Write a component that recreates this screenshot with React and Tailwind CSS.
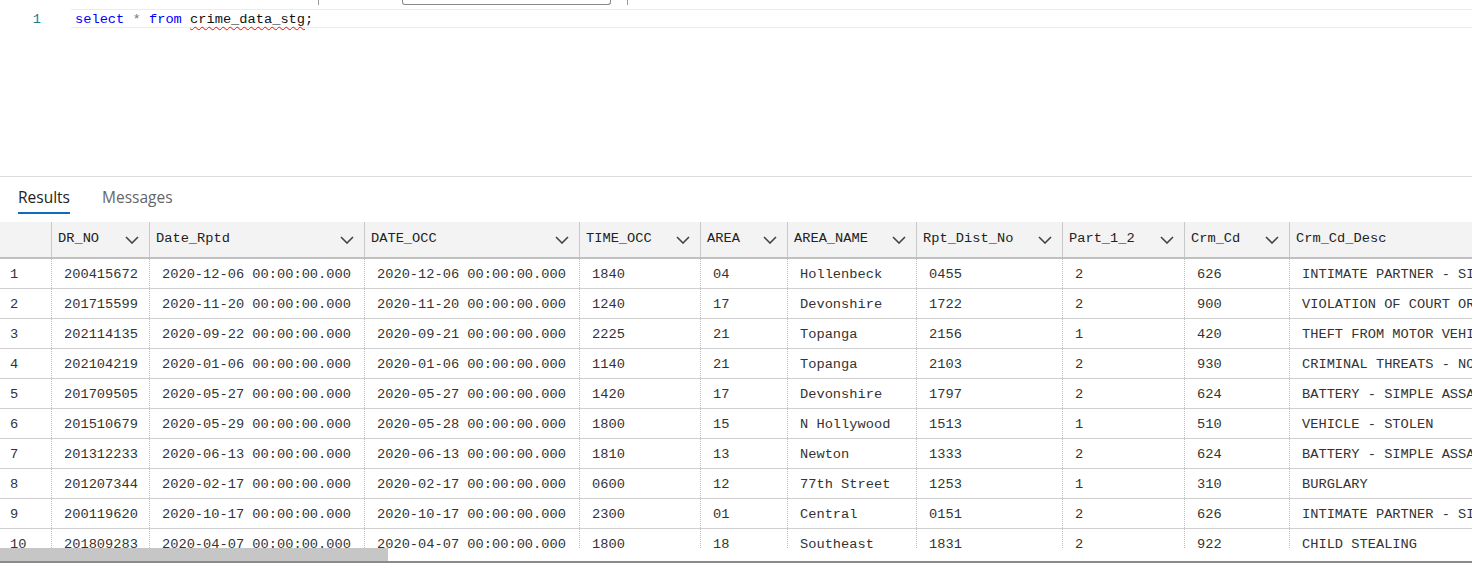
import React from "react";

const MONO = { fontFamily: '"Liberation Mono", "DejaVu Sans Mono", monospace' };

const columns = [
  { name: "", w: "w-[52px]", sort: false },
  { name: "DR_NO", w: "w-[98px]" },
  { name: "Date_Rptd", w: "w-[215px]" },
  { name: "DATE_OCC", w: "w-[215px]" },
  { name: "TIME_OCC", w: "w-[121px]" },
  { name: "AREA", w: "w-[87px]" },
  { name: "AREA_NAME", w: "w-[129px]" },
  { name: "Rpt_Dist_No", w: "w-[146px]" },
  { name: "Part_1_2", w: "w-[122px]" },
  { name: "Crm_Cd", w: "w-[105px]" },
  { name: "Crm_Cd_Desc", w: "w-[320px]", sort: false },
];

const rows = [
  ["1", "200415672", "2020-12-06 00:00:00.000", "2020-12-06 00:00:00.000", "1840", "04", "Hollenbeck", "0455", "2", "626", "INTIMATE PARTNER - SIMPLE ASSAULT"],
  ["2", "201715599", "2020-11-20 00:00:00.000", "2020-11-20 00:00:00.000", "1240", "17", "Devonshire", "1722", "2", "900", "VIOLATION OF COURT ORDER"],
  ["3", "202114135", "2020-09-22 00:00:00.000", "2020-09-21 00:00:00.000", "2225", "21", "Topanga", "2156", "1", "420", "THEFT FROM MOTOR VEHICLE"],
  ["4", "202104219", "2020-01-06 00:00:00.000", "2020-01-06 00:00:00.000", "1140", "21", "Topanga", "2103", "2", "930", "CRIMINAL THREATS - NO WEAPON"],
  ["5", "201709505", "2020-05-27 00:00:00.000", "2020-05-27 00:00:00.000", "1420", "17", "Devonshire", "1797", "2", "624", "BATTERY - SIMPLE ASSAULT"],
  ["6", "201510679", "2020-05-29 00:00:00.000", "2020-05-28 00:00:00.000", "1800", "15", "N Hollywood", "1513", "1", "510", "VEHICLE - STOLEN"],
  ["7", "201312233", "2020-06-13 00:00:00.000", "2020-06-13 00:00:00.000", "1810", "13", "Newton", "1333", "2", "624", "BATTERY - SIMPLE ASSAULT"],
  ["8", "201207344", "2020-02-17 00:00:00.000", "2020-02-17 00:00:00.000", "0600", "12", "77th Street", "1253", "1", "310", "BURGLARY"],
  ["9", "200119620", "2020-10-17 00:00:00.000", "2020-10-17 00:00:00.000", "2300", "01", "Central", "0151", "2", "626", "INTIMATE PARTNER - SIMPLE ASSAULT"],
  ["10", "201809283", "2020-04-07 00:00:00.000", "2020-04-07 00:00:00.000", "1800", "18", "Southeast", "1831", "2", "922", "CHILD STEALING"],
];

function Chevron() {
  return (
    <svg width="14" height="8" viewBox="0 0 14 8" className="shrink-0 mr-[10px]">
      <path d="M1 1 L7 7 L13 1" fill="none" stroke="#444" strokeWidth="1.6" />
    </svg>
  );
}

export default function App() {
  return (
    <div className="w-[1472px] h-[567px] bg-white overflow-hidden flex flex-col" style={MONO}>
      {/* clipped toolbar remnant */}
      <div className="h-[9px] flex items-start shrink-0">
        <div className="ml-[318px] w-px h-[5px] bg-[#999]" />
        <div className="ml-[83px] w-[209px] h-[5px] border border-t-0 border-[#8a8a8a] rounded-b-[3px]" />
        <div className="ml-[16px] w-px h-[5px] bg-[#999]" />
      </div>

      {/* editor */}
      <div className="h-[168px] shrink-0 border-b border-[#dcdcdc]">
        <div className="flex items-center h-[19px] text-[13.7px]">
          <div className="w-[41px] h-full pt-[4px] flex items-center justify-end text-[#237893]">1</div>
          <div className="ml-[30px] flex-1 h-full border-y border-[#ececec] pl-[4px] pt-[3px] flex items-center text-[#111]">
            <span className="text-[#0000ff]">select</span>
            <span className="text-[#777]">&nbsp;*&nbsp;</span>
            <span className="text-[#0000ff]">from</span>
            <span>&nbsp;</span>
            <span className="underline decoration-wavy decoration-[#e51400] underline-offset-[3px] decoration-1">crime_data_stg</span>
            <span>;</span>
          </div>
        </div>
      </div>

      {/* tabs */}
      <div className="h-[45px] shrink-0 flex items-end pl-[18px] gap-[32px]" style={{ fontFamily: '"Open Sans", "Noto Sans", sans-serif' }}>
        <div className="flex flex-col items-center mb-[8px]">
          <span className="text-[15.5px] text-[#222] leading-[20px]">Results</span>
          <div className="mt-[5px] h-[2px] w-full bg-[#0f6cbd]" />
        </div>
        <div className="mb-[15px] text-[15.5px] text-[#666] leading-[20px]">Messages</div>
      </div>

      {/* grid */}
      <div className="flex flex-col overflow-hidden text-[13.7px] text-[#333]">
        <div className="flex h-[37px] shrink-0 bg-[#f3f3f3] border-b-2 border-[#c0c0c0]">
          {columns.map((c, i) => (
            <div
              key={i}
              className={`${c.w} shrink-0 flex items-center justify-between pl-[6px] ${i < columns.length - 1 ? "border-r border-[#c8c8c8]" : ""}`}
            >
              <span className="text-[#222]">{c.name}</span>
              {c.name && c.sort !== false && <Chevron />}
            </div>
          ))}
        </div>
        <div className="h-[289px] overflow-hidden">
          {rows.map((r, ri) => (
            <div key={ri} className="flex h-[30px] border-b border-[#cfcfcf]">
              {r.map((v, ci) => (
                <div
                  key={ci}
                  className={`${columns[ci].w} shrink-0 flex items-center pt-[3px] whitespace-nowrap overflow-hidden ${ci === 0 ? "pl-[10px]" : "pl-[12px]"} ${ci < r.length - 1 ? "border-r border-dotted border-[#bdbdbd]" : ""}`}
                >
                  {v}
                </div>
              ))}
            </div>
          ))}
        </div>
        {/* horizontal scrollbar */}
        <div className="h-[15px] shrink-0 flex border-b-2 border-[#8a8a8a]">
          <div className="w-[388px] h-full bg-[#c6c6c6]" />
        </div>
      </div>
    </div>
  );
}
